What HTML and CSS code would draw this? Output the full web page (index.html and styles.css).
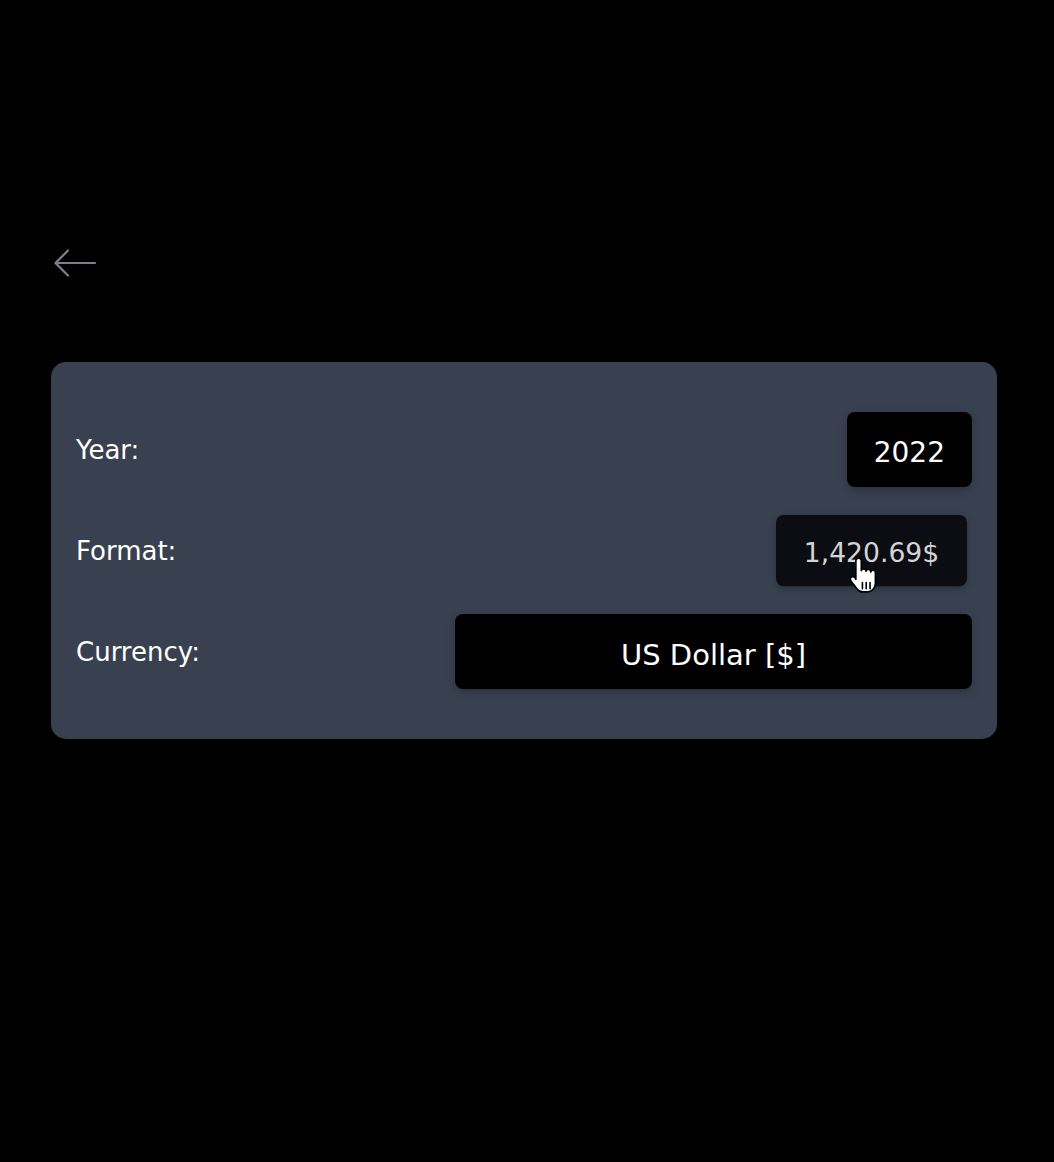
FILE: index.html
```html
<!DOCTYPE html>
<html lang="en">
<head>
<meta charset="utf-8">
<title>Settings</title>
<link rel="stylesheet" href="styles.css">
</head>
<body>
<main class="page">
  <button class="back" aria-label="Back">
    <svg width="44" height="30" viewBox="0 0 44 30" fill="none" stroke="#7d808a" stroke-width="2.2" stroke-linecap="round" stroke-linejoin="round">
      <path d="M42 15H3"/>
      <path d="M15 2.5L2.5 15 15 27.5"/>
    </svg>
  </button>
  <section class="card">
    <div class="row">
      <span class="label">Year:</span>
      <button class="btn">2022</button>
    </div>
    <div class="row">
      <span class="label">Format:</span>
      <span class="btn-wrap">
        <button class="btn btn-pressed">1,420.69$</button>
        <svg class="cursor" width="29" height="36" viewBox="0 0 26 33">
          <path d="M6 3.5a2.5 2.5 0 0 1 5 0V12.5a2.2 2.2 0 0 1 4.3.5a2.2 2.2 0 0 1 4.3.8a2.2 2.2 0 0 1 4.3 1V24c0 4.5-3 8-7.5 8h-4c-2.5 0-4-1-5.5-3L1.5 22c-1-1.3-.7-3 .5-3.6c1.2-.6 2.6-.2 3.4 1L6 20.5Z" fill="#fff" stroke="#000" stroke-width="1.5" stroke-linejoin="round"/>
          <path d="M12 23.5v5.5M15.5 23.5v5.5M19 23.5v5.5" stroke="#000" stroke-width="1.5" stroke-linecap="round"/>
        </svg>
      </span>
    </div>
    <div class="row">
      <span class="label">Currency:</span>
      <button class="btn btn-wide">US Dollar [$]</button>
    </div>
  </section>
</main>
</body>
</html>
```

FILE: styles.css
```css
html, body {
  margin: 0;
  padding: 0;
  background: #000;
}

body {
  font-family: "DejaVu Sans", Verdana, sans-serif;
  color: #fff;
  width: 1054px;
  height: 1162px;
}

.page {
  padding: 248px 57px 0 51px;
  display: flex;
  flex-direction: column;
}

.back {
  align-self: flex-start;
  background: none;
  border: 0;
  padding: 0;
  margin: 0 0 0 2px;
  height: 30px;
  cursor: pointer;
  display: block;
}

.back svg {
  display: block;
}

.card {
  margin-top: 84px;
  background: #394150;
  border-radius: 15px;
  padding: 50px 25px;
  display: flex;
  flex-direction: column;
  gap: 26px;
}

.row {
  display: flex;
  align-items: center;
  justify-content: space-between;
  height: 75px;
}

.label {
  font-size: 26px;
  color: #fff;
  line-height: 1;
}

.btn {
  font-family: "DejaVu Sans", Verdana, sans-serif;
  font-size: 28px;
  color: #fff;
  background: #000;
  border: 0;
  border-radius: 8px;
  height: 75px;
  padding: 6px 27px 0;
  box-shadow: 0 3px 8px rgba(0, 0, 0, 0.25);
  cursor: pointer;
}

.btn-wrap {
  position: relative;
  display: block;
}

.btn-pressed {
  display: block;
  width: 201px;
  background: #0b0d12;
  color: #d4d4d6;
  transform: scale(0.95);
}

.cursor {
  position: absolute;
  left: 78px;
  top: 44px;
}

.btn-wide {
  width: 517px;
  font-size: 29px;
}
```
